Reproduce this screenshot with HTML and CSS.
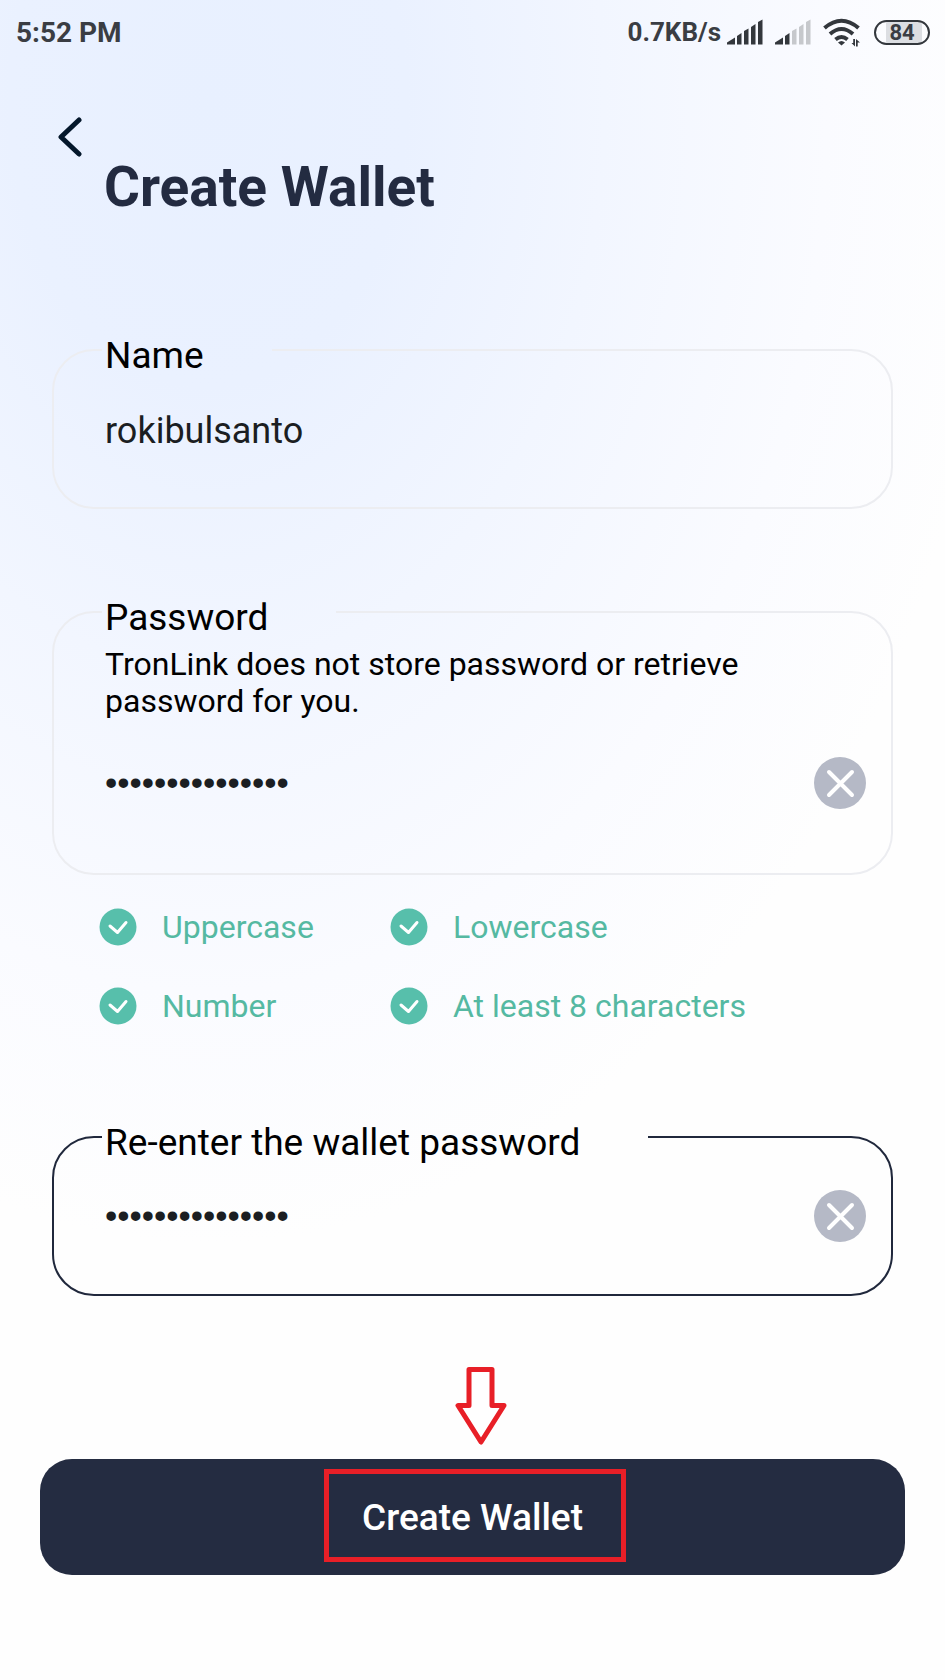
FILE: index.html
```html
<!DOCTYPE html>
<html lang="en">
<head>
    <meta charset="UTF-8">
    <meta name="viewport" content="width=device-width, initial-scale=1.0">
    <title>Create Wallet</title>
    <link rel="stylesheet" href="styles.css">
</head>
<body>
    <div class="status-bar">
        <span class="time">5:52 PM</span>
        <div class="status-icons">
            <span class="speed">0.7KB/s</span>
            <svg class="signal" width="36" height="26" viewBox="0 0 36 26">
                <path d="M0 25.500V23.500L8 18.500V25.500Z"/>
                <path d="M10 25.500V17L14.500 14V25.500Z"/>
                <path d="M17 25.500V12L21.500 9.500V25.500Z"/>
                <path d="M24 25.500V8L28.500 5V25.500Z"/>
                <path d="M31 25.500V3L35.500 0.500V25.500Z"/>
            </svg>
            <svg class="signal second" width="36" height="26" viewBox="0 0 36 26">
                <path d="M0 25.500V23.500L8 18.500V25.500Z"/>
                <path d="M10 25.500V17L14.500 14V25.500Z"/>
                <path class="off" d="M17 25.500V12L21.500 9.500V25.500Z"/>
                <path class="off" d="M24 25.500V8L28.500 5V25.500Z"/>
                <path class="off" d="M31 25.500V3L35.500 0.500V25.500Z"/>
            </svg>
            <svg class="wifi" width="38" height="30" viewBox="0 0 38 30">
                <path class="arc" d="M1.500 11Q18.500 -3.500 35.500 11"/>
                <path class="arc" d="M7 17Q18.500 7 30 17"/>
                <path class="arc" d="M12.500 22.500Q18.500 17.500 24.500 22.500"/>
                <path d="M15 25.500Q18.500 22.500 22 25.500L18.500 28.500Z"/>
                <path d="M28.500 26L32 29.500V22H30.200V26ZM33 22V29.500H34.700V25.500L37 25.500Z"/>
            </svg>
            <span class="battery">84</span>
        </div>
    </div>

    <header class="header">
        <button class="back" type="button" aria-label="Back">
            <svg width="24" height="40" viewBox="0 0 24 40">
                <path d="M21 3L3 20L21 37"/>
            </svg>
        </button>
        <h1>Create Wallet</h1>
    </header>

    <form class="wallet-form">
        <fieldset class="field">
            <legend><label for="name">Name</label></legend>
            <div class="row">
                <input type="text" id="name" value="rokibulsanto" autocomplete="off">
            </div>
        </fieldset>

        <fieldset class="field password">
            <legend><label for="password">Password</label></legend>
            <p class="hint">TronLink does not store password or retrieve password for you.</p>
            <div class="row">
                <input type="password" id="password" value="Rokibulsanto123">
                <button class="clear" type="button" aria-label="Clear">
                    <svg width="52" height="52" viewBox="0 0 52 52">
                        <circle cx="26" cy="26" r="26"/>
                        <path d="M15 15L38 38M38 15L15 38"/>
                    </svg>
                </button>
            </div>
        </fieldset>

        <ul class="rules">
            <li>
                <svg width="38" height="38" viewBox="0 0 38 38"><circle cx="19" cy="19" r="18.500"/><path d="M11 18L18.500 24.500L27 14.500"/></svg>
                Uppercase
            </li>
            <li>
                <svg width="38" height="38" viewBox="0 0 38 38"><circle cx="19" cy="19" r="18.500"/><path d="M11 18L18.500 24.500L27 14.500"/></svg>
                Lowercase
            </li>
            <li>
                <svg width="38" height="38" viewBox="0 0 38 38"><circle cx="19" cy="19" r="18.500"/><path d="M11 18L18.500 24.500L27 14.500"/></svg>
                Number
            </li>
            <li>
                <svg width="38" height="38" viewBox="0 0 38 38"><circle cx="19" cy="19" r="18.500"/><path d="M11 18L18.500 24.500L27 14.500"/></svg>
                At least 8 characters
            </li>
        </ul>

        <fieldset class="field active">
            <legend><label for="confirm">Re-enter the wallet password</label></legend>
            <div class="row">
                <input type="password" id="confirm" value="Rokibulsanto123">
                <button class="clear" type="button" aria-label="Clear">
                    <svg width="52" height="52" viewBox="0 0 52 52">
                        <circle cx="26" cy="26" r="26"/>
                        <path d="M15 15L38 38M38 15L15 38"/>
                    </svg>
                </button>
            </div>
        </fieldset>

        <div class="submit">
            <button class="create" type="submit">Create Wallet</button>
            <span class="highlight"></span>
            <svg class="arrow" width="52" height="78" viewBox="0 0 52 78">
                <path d="M14 2.500H37V38.500H49L26 75L3 38.500H14Z"/>
            </svg>
        </div>
    </form>
</body>
</html>
```
FILE: styles.css
```css
* {
    box-sizing: border-box;
}
body {
    margin: 0;
    min-height: 100vh;
    font-family: Roboto, "Liberation Sans", sans-serif;
    color: #000;
    background: #fefefe radial-gradient(ellipse 84% 68% at 22% 6%, #e8f0ff 0%, #eaf1ff 25%, #f2f6ff 50%, #fafbff 78%, #fefefe 100%) no-repeat;
}
button {
    padding: 0;
    border: none;
    background: none;
    font-family: inherit;
    cursor: pointer;
}
svg {
    display: block;
}

/* status bar */
.status-bar {
    display: flex;
    justify-content: space-between;
    align-items: center;
    height: 64px;
    padding: 0 15px 0 16px;
    font-size: 28px;
    font-weight: 700;
    color: #3a3d43;
}
.status-icons {
    display: flex;
    align-items: center;
}
.speed {
    font-size: 26px;
    margin-right: 6px;
}
.signal,
.wifi {
    fill: #33373c;
}
.signal .off {
    fill: #c6c8cc;
}
.second {
    margin: 0 12px;
}
.wifi .arc {
    fill: none;
    stroke: #33373c;
    stroke-width: 4;
}
.battery {
    width: 56px;
    height: 25px;
    margin-left: 13px;
    border: 2px solid #33373c;
    border-radius: 13px;
    background: linear-gradient(90deg, transparent 20%, #dcdee2 20%, #dcdee2 88%, transparent 88%);
    font-size: 22px;
    line-height: 22px;
    text-align: center;
}

/* header */
.header {
    display: flex;
    align-items: flex-start;
    gap: 22px;
    padding: 53px 58px 0;
}
.back {
    flex: none;
}
.back path {
    fill: none;
    stroke: #04172b;
    stroke-width: 5;
    stroke-linecap: round;
    stroke-linejoin: round;
}
h1 {
    margin: 38px 0 0;
    font-size: 55px;
    line-height: 64px;
    font-weight: 700;
    color: #232b41;
}

/* form */
.wallet-form {
    padding: 104px 52px 0;
}
.field {
    min-width: 0;
    margin: 0 0 76px;
    padding: 0 25px 50px 48px;
    border: 2px solid #ecedf1;
    border-radius: 42px;
}
.field legend {
    padding: 12px 68px 0 3px;
    font-size: 37px;
    line-height: 42px;
}
.row {
    display: flex;
    align-items: center;
    height: 80px;
    padding: 28px 0 0 3px;
}
.row input {
    flex: 1;
    min-width: 0;
    height: 52px;
    padding: 0;
    border: none;
    outline: none;
    background: none;
    font-family: inherit;
    font-size: 36px;
    color: #1b1e22;
}
/* wider bullets than Roboto's */
.row input[type="password"] {
    font-family: "Liberation Sans", sans-serif;
    font-size: 35px;
}
.clear circle {
    fill: #b5b9c6;
}
.clear path {
    stroke: #fff;
    stroke-width: 4;
    stroke-linecap: round;
}
.hint {
    margin: 7px 0 9px 3px;
    max-width: 640px;
    font-size: 32px;
    line-height: 37px;
}
.field.password {
    margin-bottom: 31px;
    padding-bottom: 64px;
}
.field.active {
    margin-bottom: 0;
    padding-bottom: 52px;
    border-color: #20283c;
}
.field.active .row {
    height: 78px;
    padding-top: 26px;
}

.rules {
    display: grid;
    grid-template-columns: 291px 1fr;
    row-gap: 37px;
    margin: 0 0 83px;
    padding: 0 0 0 47px;
    list-style: none;
    font-size: 32px;
    line-height: 42px;
    color: #55b9a2;
}
.rules li {
    display: flex;
    align-items: center;
    gap: 25px;
}
.rules circle {
    fill: #57bfab;
}
.rules path {
    fill: none;
    stroke: #fff;
    stroke-width: 3;
    stroke-linecap: round;
    stroke-linejoin: round;
}

.submit {
    position: relative;
    margin: 163px -12px 0;
    padding-bottom: 105px;
}
.create {
    display: block;
    width: 100%;
    height: 116px;
    border-radius: 32px;
    background: #242c41;
    color: #fff;
    font-size: 37px;
    font-weight: 500;
}
/* red marks drawn over the button */
.highlight {
    position: absolute;
    top: 10px;
    left: calc(50% - 149px);
    width: 302px;
    height: 93px;
    border: 5px solid #e81f27;
    pointer-events: none;
}
.arrow {
    position: absolute;
    top: -92px;
    left: calc(50% - 18px);
}
.arrow path {
    fill: #fff;
    stroke: #e81f27;
    stroke-width: 5;
    stroke-linejoin: round;
}
```
